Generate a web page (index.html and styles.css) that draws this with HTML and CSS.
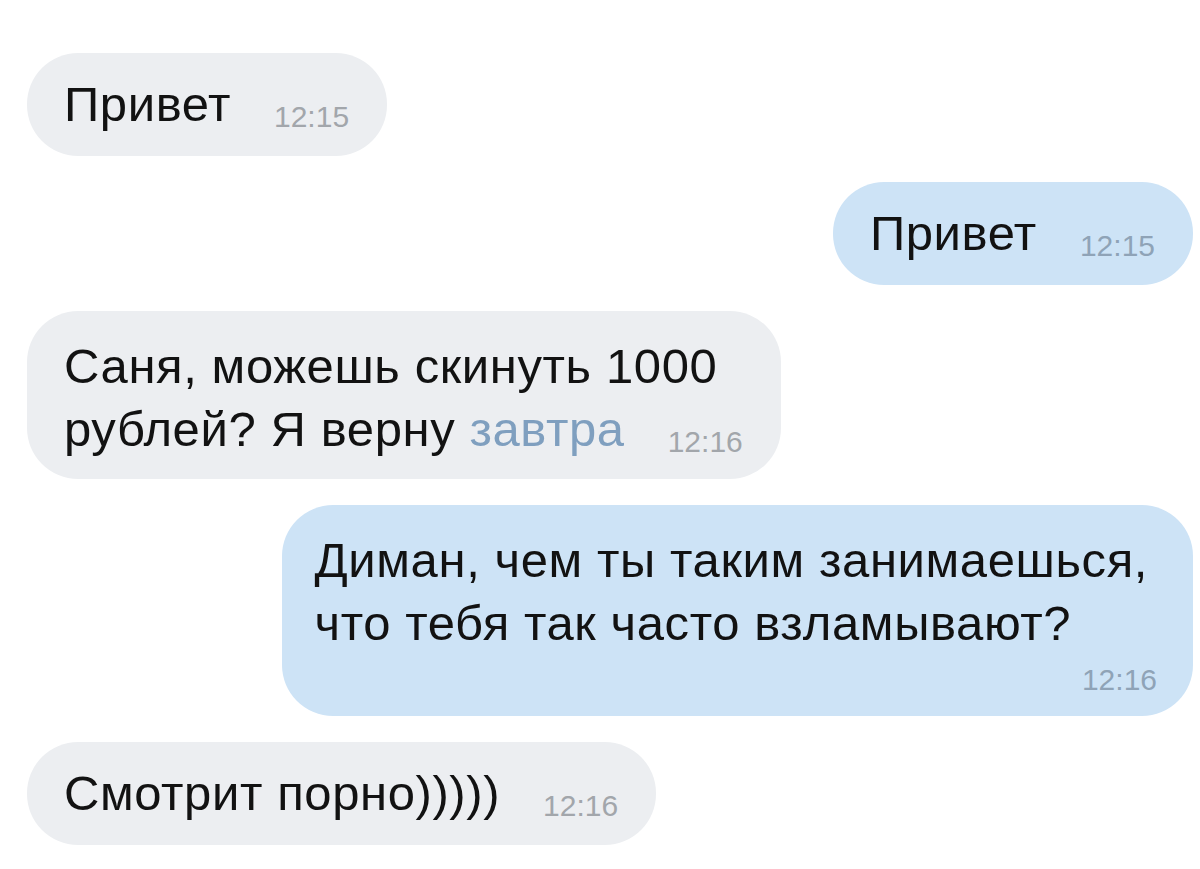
FILE: index.html
```html
<!DOCTYPE html>
<html lang="ru">
<head>
<meta charset="utf-8">
<title>Диалог</title>
<link rel="stylesheet" href="styles.css">
</head>
<body>
<div class="chat">
  <div class="msg in">
    <span class="text">Привет</span><span class="time">12:15</span>
  </div>
  <div class="msg out">
    <span class="text">Привет</span><span class="time">12:15</span>
  </div>
  <div class="msg in multi">
    <span class="text">Саня, можешь скинуть 1000<br>рублей? Я верну <span class="link">завтра</span></span><span class="time">12:16</span>
  </div>
  <div class="msg out block">
    <div class="text">Диман, чем ты таким занимаешься,<br>что тебя так часто взламывают?</div>
    <div class="time">12:16</div>
  </div>
  <div class="msg in">
    <span class="text">Смотрит порно)))))</span><span class="time">12:16</span>
  </div>
</div>
</body>
</html>
```

FILE: styles.css
```css
html, body {
  margin: 0;
  padding: 0;
  background: #ffffff;
}

.chat {
  display: flex;
  flex-direction: column;
  gap: 26px;
  padding: 53px 7px 0 27px;
  font-family: "Liberation Sans", Arial, sans-serif;
  color: #121212;
}

.msg {
  border-radius: 51px;
  padding: 20px 38px 20px 37px;
  font-size: 49px;
  letter-spacing: 0.6px;
  line-height: 63px;
}

.msg.in {
  align-self: flex-start;
  background: #eceef1;
}

.msg.out {
  align-self: flex-end;
  background: #cde3f6;
}

.msg.multi {
  padding-top: 24px;
  padding-bottom: 18px;
}

.time {
  font-size: 30px;
  line-height: 30px;
  letter-spacing: 0;
  color: #a2a6ab;
  margin-left: 43px;
  position: relative;
  top: 6px;
}

.out .time {
  color: #8fa3b7;
}

.link {
  color: #7f9fbf;
}

.msg.block {
  display: flex;
  flex-direction: column;
  padding: 24px 36px 11px 33px;
}

.msg.block .text {
  padding-right: 9px;
}

.msg.block .time {
  align-self: flex-end;
  line-height: 50px;
  top: 0;
}
```
